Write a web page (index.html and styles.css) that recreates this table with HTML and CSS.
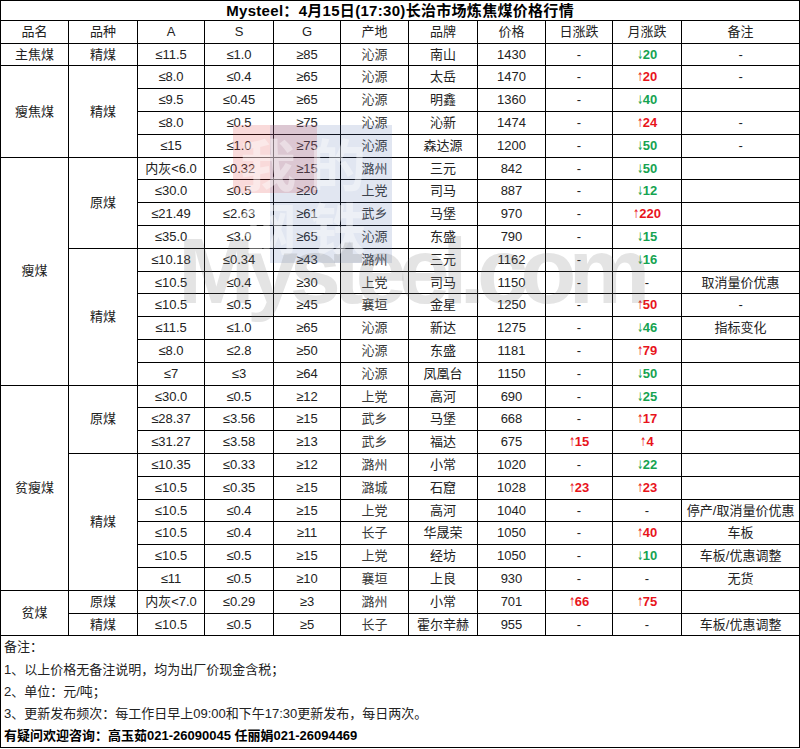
FILE: index.html
```html
<!DOCTYPE html>
<html lang="zh-CN">
<head>
<meta charset="utf-8">
<title>Mysteel 长治市场炼焦煤价格行情</title>
<link rel="stylesheet" href="styles.css">
</head>
<body>
<div class="sheet">
<table class="price">
<colgroup>
<col class="c1"><col class="c2"><col class="c3"><col class="c4"><col class="c5"><col class="c6"><col class="c7"><col class="c8"><col class="c9"><col class="c10"><col class="c11">
</colgroup>
<tr class="title"><td colspan="11">Mysteel：4月15日(17:30)长治市场炼焦煤价格行情</td></tr>
<tr class="head"><td>品名</td><td>品种</td><td>A</td><td>S</td><td>G</td><td>产地</td><td>品牌</td><td>价格</td><td>日涨跌</td><td>月涨跌</td><td>备注</td></tr>
<tr><td>主焦煤</td><td>精煤</td><td>≤11.5</td><td>≤1.0</td><td>≥85</td><td class="o">沁源</td><td>南山</td><td>1430</td><td>-</td><td><span class="dn"><i>↓</i>20</span></td><td>-</td></tr>
<tr><td rowspan="4">瘦焦煤</td><td rowspan="4">精煤</td><td>≤8.0</td><td>≤0.4</td><td>≥65</td><td class="o">沁源</td><td>太岳</td><td>1470</td><td>-</td><td><span class="up"><i>↑</i>20</span></td><td>-</td></tr>
<tr><td>≤9.5</td><td>≤0.45</td><td>≥65</td><td class="o">沁源</td><td>明鑫</td><td>1360</td><td>-</td><td><span class="dn"><i>↓</i>40</span></td><td></td></tr>
<tr><td>≤8.0</td><td>≤0.5</td><td>≥75</td><td class="o">沁源</td><td>沁新</td><td>1474</td><td>-</td><td><span class="up"><i>↑</i>24</span></td><td>-</td></tr>
<tr><td>≤15</td><td>≤1.0</td><td>≥75</td><td class="o">沁源</td><td>森达源</td><td>1200</td><td>-</td><td><span class="dn"><i>↓</i>50</span></td><td>-</td></tr>
<tr><td rowspan="10">瘦煤</td><td rowspan="4">原煤</td><td>内灰&lt;6.0</td><td>≤0.32</td><td>≥15</td><td class="o">潞州</td><td>三元</td><td>842</td><td>-</td><td><span class="dn"><i>↓</i>50</span></td><td></td></tr>
<tr><td>≤30.0</td><td>≤0.5</td><td>≥20</td><td class="o">上党</td><td>司马</td><td>887</td><td>-</td><td><span class="dn"><i>↓</i>12</span></td><td></td></tr>
<tr><td>≤21.49</td><td>≤2.63</td><td>≥61</td><td class="o">武乡</td><td>马堡</td><td>970</td><td>-</td><td><span class="up"><i>↑</i>220</span></td><td></td></tr>
<tr><td>≤35.0</td><td>≤3.0</td><td>≥65</td><td class="o">沁源</td><td>东盛</td><td>790</td><td>-</td><td><span class="dn"><i>↓</i>15</span></td><td></td></tr>
<tr><td rowspan="6">精煤</td><td>≤10.18</td><td>≤0.34</td><td>≥43</td><td class="o">潞州</td><td>三元</td><td>1162</td><td>-</td><td><span class="dn"><i>↓</i>16</span></td><td></td></tr>
<tr><td>≤10.5</td><td>≤0.4</td><td>≥30</td><td class="o">上党</td><td>司马</td><td>1150</td><td>-</td><td>-</td><td>取消量价优惠</td></tr>
<tr><td>≤10.5</td><td>≤0.5</td><td>≥45</td><td class="o">襄垣</td><td>金星</td><td>1250</td><td>-</td><td><span class="up"><i>↑</i>50</span></td><td>-</td></tr>
<tr><td>≤11.5</td><td>≤1.0</td><td>≥65</td><td class="o">沁源</td><td>新达</td><td>1275</td><td>-</td><td><span class="dn"><i>↓</i>46</span></td><td>指标变化</td></tr>
<tr><td>≤8.0</td><td>≤2.8</td><td>≥50</td><td class="o">沁源</td><td>东盛</td><td>1181</td><td>-</td><td><span class="up"><i>↑</i>79</span></td><td></td></tr>
<tr><td>≤7</td><td>≤3</td><td>≥64</td><td class="o">沁源</td><td>凤凰台</td><td>1150</td><td>-</td><td><span class="dn"><i>↓</i>50</span></td><td></td></tr>
<tr><td rowspan="9">贫瘦煤</td><td rowspan="3">原煤</td><td>≤30.0</td><td>≤0.5</td><td>≥12</td><td class="o">上党</td><td>高河</td><td>690</td><td>-</td><td><span class="dn"><i>↓</i>25</span></td><td></td></tr>
<tr><td>≤28.37</td><td>≤3.56</td><td>≥15</td><td class="o">武乡</td><td>马堡</td><td>668</td><td>-</td><td><span class="up"><i>↑</i>17</span></td><td></td></tr>
<tr><td>≤31.27</td><td>≤3.58</td><td>≥13</td><td class="o">武乡</td><td>福达</td><td>675</td><td><span class="up"><i>↑</i>15</span></td><td><span class="up"><i>↑</i>4</span></td><td></td></tr>
<tr><td rowspan="6">精煤</td><td>≤10.35</td><td>≤0.33</td><td>≥12</td><td class="o">潞州</td><td>小常</td><td>1020</td><td>-</td><td><span class="dn"><i>↓</i>22</span></td><td></td></tr>
<tr><td>≤10.5</td><td>≤0.35</td><td>≥15</td><td class="o">潞城</td><td>石窟</td><td>1028</td><td><span class="up"><i>↑</i>23</span></td><td><span class="up"><i>↑</i>23</span></td><td></td></tr>
<tr><td>≤10.5</td><td>≤0.4</td><td>≥15</td><td class="o">上党</td><td>高河</td><td>1040</td><td>-</td><td>-</td><td>停产/取消量价优惠</td></tr>
<tr><td>≤10.5</td><td>≤0.4</td><td>≥11</td><td class="o">长子</td><td>华晟荣</td><td>1050</td><td>-</td><td><span class="up"><i>↑</i>40</span></td><td>车板</td></tr>
<tr><td>≤10.5</td><td>≤0.5</td><td>≥15</td><td class="o">上党</td><td>经坊</td><td>1050</td><td>-</td><td><span class="dn"><i>↓</i>10</span></td><td>车板/优惠调整</td></tr>
<tr><td>≤11</td><td>≤0.5</td><td>≥10</td><td class="o">襄垣</td><td>上良</td><td>930</td><td>-</td><td>-</td><td>无货</td></tr>
<tr><td rowspan="2">贫煤</td><td>原煤</td><td>内灰&lt;7.0</td><td>≤0.29</td><td>≥3</td><td class="o">潞州</td><td>小常</td><td>701</td><td><span class="up"><i>↑</i>66</span></td><td><span class="up"><i>↑</i>75</span></td><td></td></tr>
<tr><td>精煤</td><td>≤10.5</td><td>≤0.5</td><td>≥5</td><td class="o">长子</td><td>霍尔辛赫</td><td>955</td><td>-</td><td>-</td><td>车板/优惠调整</td></tr>
<tr class="notes"><td colspan="11">
<p>备注：</p>
<p>1、以上价格无备注说明，均为出厂价现金含税；</p>
<p>2、单位：元/吨；</p>
<p>3、更新发布频次：每工作日早上09:00和下午17:30更新发布，每日两次。</p>
<p class="contact">有疑问欢迎咨询：高玉茹021-26090045 任丽娟021-26094469</p>
</td></tr>
</table>
<div class="wm" aria-hidden="true">
<div class="wm-red"></div>
<div class="wm-blue"></div>
<div class="wm-chars"><span>我</span><span>的</span><span>钢</span><span>铁</span></div>
<div class="wm-text">Mysteel.com</div>
</div>
</div>
</body>
</html>
```
FILE: styles.css
```css
html, body {
  margin: 0;
  padding: 0;
  background: #fff;
}
body {
  font-family: "Liberation Sans", "Noto Sans CJK SC", sans-serif;
  font-size: 13px;
  color: #222;
}
.sheet {
  position: relative;
  width: 800px;
}
.price {
  border-collapse: collapse;
  table-layout: fixed;
  width: 799px;
}
.c1 { width: 68px; }
.c2 { width: 69px; }
.c3 { width: 67px; }
.c4 { width: 69px; }
.c5 { width: 67px; }
.c6 { width: 68px; }
.c7 { width: 69px; }
.c8 { width: 68px; }
.c9 { width: 67px; }
.c10 { width: 69px; }
.c11 { width: 118px; }
.price td {
  border: 1px solid #000;
  padding: 0;
  text-align: center;
  vertical-align: middle;
  white-space: nowrap;
  height: 21.8px;
  line-height: 16px;
}
.price .title td {
  height: 19px;
  font-weight: 700;
  font-size: 15px;
  letter-spacing: 0.3px;
  color: #000;
}
.price .head td {
  height: 21.7px;
}
.price td.o {
  color: #383838;
}
.up, .dn {
  font-weight: 700;
}
.up { color: #e8141c; }
.dn { color: #16a351; }
.up i, .dn i {
  font-style: normal;
  font-weight: 400;
  font-family: "DejaVu Sans", sans-serif;
  font-size: 12px;
  display: inline-block;
  transform: scaleX(0.6);
  margin: 0 -2px 0 -2px;
}
.price .notes td {
  text-align: left;
  padding: 0 0 0 3px;
  height: auto;
}
.notes p {
  margin: 0;
  line-height: 22.2px;
}
.notes .contact {
  font-weight: 700;
  color: #000;
}
.wm {
  position: absolute;
  left: 0;
  top: 0;
  width: 800px;
  height: 749px;
  pointer-events: none;
}
.wm-red {
  position: absolute;
  left: 233px;
  top: 125px;
  width: 84px;
  height: 68px;
  background: rgba(225, 70, 70, 0.2);
}
.wm-blue {
  position: absolute;
  left: 270px;
  top: 125px;
  width: 122px;
  height: 138px;
  background: rgba(90, 115, 175, 0.18);
}
.wm-chars {
  position: absolute;
  left: 240px;
  top: 130px;
  width: 150px;
  display: grid;
  grid-template-columns: 70px 70px;
  grid-auto-rows: 64px;
  font-family: "Noto Sans CJK SC", sans-serif;
  font-size: 56px;
  line-height: 64px;
  font-weight: 700;
  color: rgba(255, 255, 255, 0.4);
}
.wm-text {
  position: absolute;
  left: 178px;
  top: 216px;
  font-family: "Liberation Sans", sans-serif;
  font-weight: 700;
  font-size: 92px;
  letter-spacing: -8px;
  line-height: 110px;
  color: rgba(120, 120, 120, 0.2);
}
```
